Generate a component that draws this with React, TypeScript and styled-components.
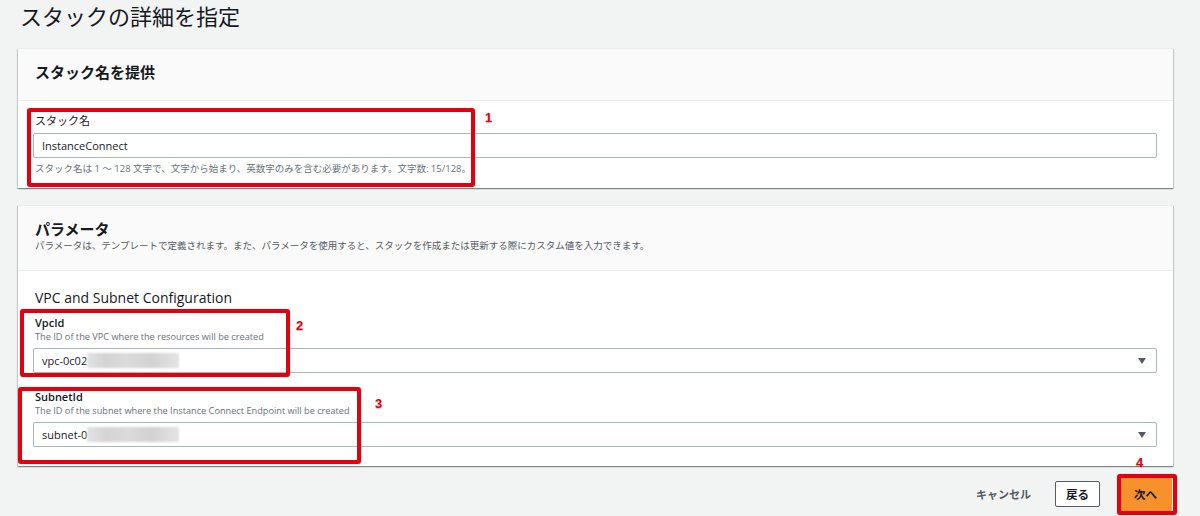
import React from 'react';
import styled, { createGlobalStyle } from 'styled-components';

const GlobalStyle = createGlobalStyle`
  html, body {
    margin: 0;
    padding: 0;
    background: #f2f3f3;
  }
  body {
    font-family: "Open Sans", "Noto Sans CJK JP", sans-serif;
    color: #16191f;
  }
`;

const Page = styled.div`
  position: relative;
  width: 1200px;
  height: 516px;
  padding-left: 18px;
  box-sizing: border-box;
  overflow: hidden;
`;

const Content = styled.div`
  width: 1155px;
`;

const Title = styled.h1`
  margin: 0;
  height: 48px;
  padding: 0 0 0 2px;
  box-sizing: border-box;
  font-size: 22px;
  font-weight: 400;
  line-height: 32px;
  color: #16191f;
`;

const Panel = styled.section`
  background: #fff;
  border-top: 1px solid #eaeded;
  box-shadow: 0 1px 1px 0 rgba(0, 28, 36, 0.3), 1px 1px 1px 0 rgba(0, 28, 36, 0.15),
    -1px 1px 1px 0 rgba(0, 28, 36, 0.15);
  & + & {
    margin-top: 17px;
  }
`;

const PanelHeader = styled.header<{ $height: number }>`
  height: ${(p) => p.$height}px;
  box-sizing: border-box;
  background: #fafafa;
  border-bottom: 1px solid #eaeded;
  padding: 13px 17px 0;
`;

const PanelTitle = styled.h2`
  margin: 0;
  font-size: 15px;
  font-weight: 700;
  line-height: 20px;
`;

const PanelDesc = styled.p`
  margin: 0;
  font-size: 9.5px;
  line-height: 14px;
  color: #545b64;
`;

const PanelBody = styled.div<{ $pad: string }>`
  padding: ${(p) => p.$pad};
  display: flex;
  flex-direction: column;
`;

const SubHeading = styled.h3`
  margin: 0 0 8px 2px;
  font-size: 14px;
  font-weight: 400;
  line-height: 20px;
`;

const Field = styled.div`
  display: flex;
  flex-direction: column;
  & + & {
    margin-top: 17px;
  }
`;

const Label = styled.label<{ $bold?: boolean }>`
  margin-left: 2px;
  font-size: 11px;
  font-weight: ${(p) => (p.$bold ? 600 : 400)};
  line-height: 14px;
`;

const FieldDesc = styled.span`
  margin-left: 2px;
  font-size: 9.2px;
  line-height: 14px;
  color: #687078;
`;

const Hint = styled.span`
  margin: 4px 0 0 2px;
  font-size: 9.5px;
  line-height: 14px;
  color: #687078;
`;

const Input = styled.div<{ $top: number }>`
  margin-top: ${(p) => p.$top}px;
  height: 25px;
  box-sizing: border-box;
  border: 1px solid #aab7b8;
  border-radius: 2px;
  padding: 0 8px;
  display: flex;
  align-items: center;
  font-size: 11px;
  color: #16191f;
`;

const Masked = styled.span<{ $w: number }>`
  display: inline-block;
  width: ${(p) => p.$w}px;
  height: 15px;
  background: linear-gradient(90deg, #e2e2e2 0%, #d4d4d4 20%, #dadada 45%, #d2d2d2 70%, #e4e4e4 100%);
  filter: blur(1.2px);
`;

const Caret = styled.span`
  margin-left: auto;
  margin-right: 2px;
  width: 0;
  height: 0;
  border-left: 4px solid transparent;
  border-right: 4px solid transparent;
  border-top: 6px solid #545b64;
`;

const Footer = styled.div`
  display: flex;
  justify-content: flex-end;
  align-items: center;
  margin-top: 10px;
  padding-right: 1px;
`;

const TextButton = styled.button`
  border: none;
  background: none;
  font-family: inherit;
  font-size: 11px;
  font-weight: 700;
  color: #545b64;
  padding: 0;
  margin-right: 24px;
`;

const Button = styled.button<{ $primary?: boolean }>`
  font-family: inherit;
  font-size: 11.5px;
  font-weight: 700;
  box-sizing: border-box;
  border-radius: 2px;
  cursor: pointer;
  padding: 0;
  color: #16191f;
  width: ${(p) => (p.$primary ? '53px' : '45px')};
  height: ${(p) => (p.$primary ? '35px' : '26px')};
  background: ${(p) => (p.$primary ? '#f7912c' : '#fff')};
  border: 1px solid ${(p) => (p.$primary ? '#f7912c' : '#545b64')};
  & + & {
    margin-left: ${(p) => (p.$primary ? '19px' : '0')};
  }
`;

const Mark = styled.div`
  position: absolute;
  box-sizing: border-box;
  border: 4px solid #e3000f;
  border-radius: 3px;
  pointer-events: none;
  box-shadow: 0 0 1px rgba(120, 0, 0, 0.4);
`;

const Num = styled.span`
  position: absolute;
  font-family: "Liberation Sans", sans-serif;
  font-size: 13px;
  font-weight: 700;
  color: #e3000f;
  text-shadow: 0 1px 1px rgba(0, 0, 0, 0.25);
`;

const marks = [
  { x: 27, y: 108, w: 448, h: 79 },
  { x: 20, y: 309, w: 270, h: 68 },
  { x: 18, y: 387, w: 343, h: 77 },
  { x: 1117, y: 474, w: 60, h: 41 },
];

const nums = [
  { x: 485, y: 110, t: '1' },
  { x: 296, y: 318, t: '2' },
  { x: 375, y: 396, t: '3' },
  { x: 1136, y: 455, t: '4' },
];

const App: React.FC = () => {
  return (
    <Page>
      <GlobalStyle />
      <Content>
        <Title>スタックの詳細を指定</Title>

        <Panel>
          <PanelHeader $height={52}>
            <PanelTitle>スタック名を提供</PanelTitle>
          </PanelHeader>
          <PanelBody $pad="13px 16px 12px 15px">
            <Field>
              <Label>スタック名</Label>
              <Input $top={5}>InstanceConnect</Input>
              <Hint>
                スタック名は 1 ～ 128 文字で、文字から始まり、英数字のみを含む必要があります。文字数: 15/128。
              </Hint>
            </Field>
          </PanelBody>
        </Panel>

        <Panel>
          <PanelHeader $height={65}>
            <PanelTitle>パラメータ</PanelTitle>
            <PanelDesc>
              パラメータは、テンプレートで定義されます。また、パラメータを使用すると、スタックを作成または更新する際にカスタム値を入力できます。
            </PanelDesc>
          </PanelHeader>
          <PanelBody $pad="17px 16px 19px 15px">
            <SubHeading>VPC and Subnet Configuration</SubHeading>
            <Field>
              <Label $bold>VpcId</Label>
              <FieldDesc>The ID of the VPC where the resources will be created</FieldDesc>
              <Input $top={4}>
                vpc-0c02
                <Masked $w={92} />
                <Caret />
              </Input>
            </Field>
            <Field>
              <Label $bold>SubnetId</Label>
              <FieldDesc>The ID of the subnet where the Instance Connect Endpoint will be created</FieldDesc>
              <Input $top={4}>
                subnet-0
                <Masked $w={92} />
                <Caret />
              </Input>
            </Field>
          </PanelBody>
        </Panel>

        <Footer>
          <TextButton>キャンセル</TextButton>
          <Button>戻る</Button>
          <Button $primary>次へ</Button>
        </Footer>
      </Content>

      {marks.map((m, i) => (
        <Mark key={i} style={{ left: m.x, top: m.y, width: m.w, height: m.h }} />
      ))}
      {nums.map((n) => (
        <Num key={n.t} style={{ left: n.x, top: n.y }}>
          {n.t}
        </Num>
      ))}
    </Page>
  );
};

export default App;
